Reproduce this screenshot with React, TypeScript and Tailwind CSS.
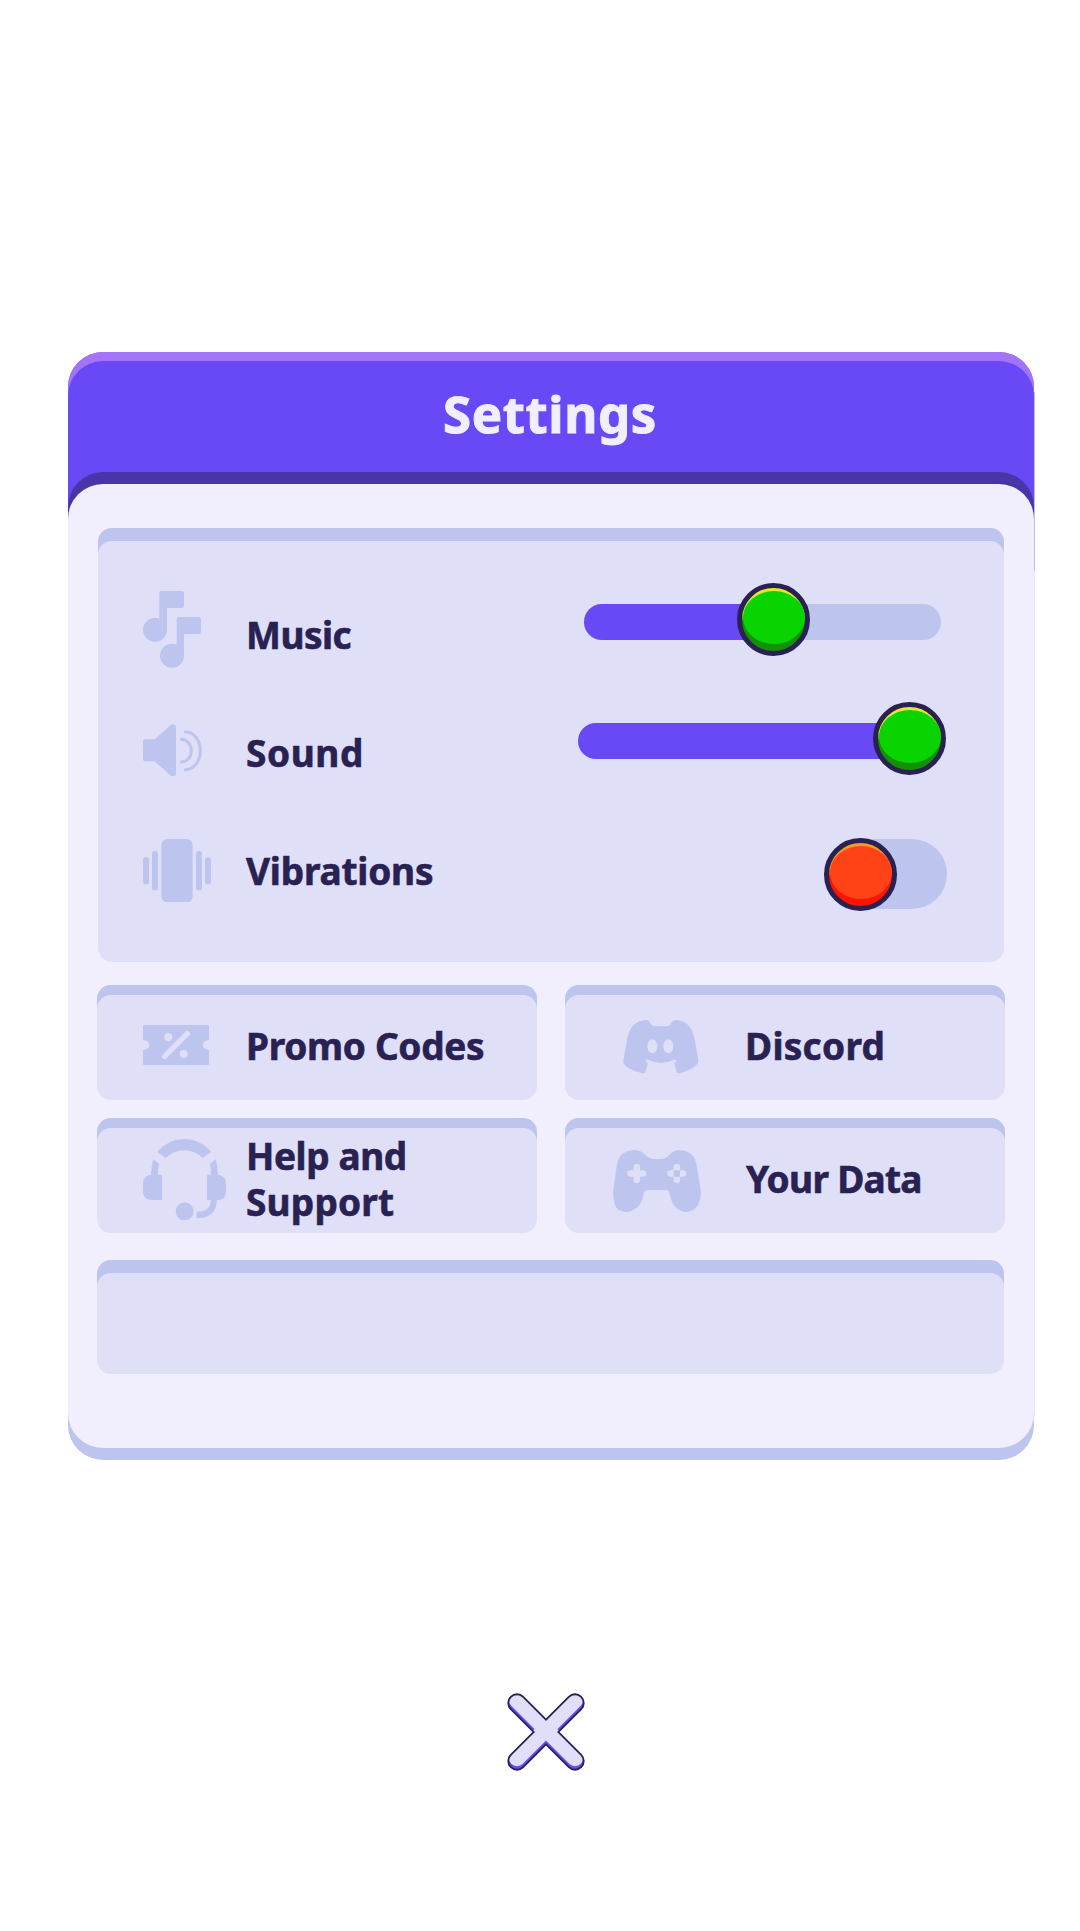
import type { ReactNode } from "react";

const ICON = "#bdc5ee";
const SURFACE = "#dfdff7";

function MusicIcon() {
  return (
    <svg width="58" height="77" viewBox="69 63 174 231" fill={ICON}>
      <path d="M118 70q0-7 7-7H185q7 0 7 7V107q0 7-7 7H141V180a36 36 0 1 1-23-34Z" />
      <path d="M170 148q0-7 7-7H236q7 0 7 7V185q0 7-7 7H192V258a36 36 0 1 1-22-34Z" />
    </svg>
  );
}

function SoundIcon() {
  return (
    <svg width="59" height="53" viewBox="69 461 177 159" fill={ICON}>
      <path d="M77 507H104L151 465Q157 460 163 463Q168 465 168 472V608Q168 615 163 617Q157 620 151 615L104 573H77Q69 573 69 565V515Q69 507 77 507Z" />
      <g fill="none" stroke={ICON} strokeWidth="9" strokeLinecap="round">
        <path d="M184 507A30 34 0 0 1 184 575" />
        <path d="M196 484A45 57 0 0 1 196 598" />
      </g>
    </svg>
  );
}

function VibrationIcon() {
  return (
    <svg width="68" height="63.3" viewBox="69 806 204 190" fill={ICON}>
      <rect x="69" y="861" width="18" height="81" rx="8" />
      <rect x="96" y="842" width="18" height="118" rx="8" />
      <rect x="124" y="806" width="94" height="190" rx="18" />
      <rect x="228" y="842" width="18" height="118" rx="8" />
      <rect x="255" y="861" width="18" height="81" rx="8" />
    </svg>
  );
}

function TicketIcon() {
  return (
    <svg width="66" height="40" viewBox="189 285 198 120" fill={ICON}>
      <path d="M192 285H384Q387 285 387 288V330Q369 331 369 345Q369 359 387 360V402Q387 405 384 405H192Q189 405 189 402V360Q208 359 208 345Q208 331 189 330V288Q189 285 192 285Z" />
      <path d="M254 379L322 311" stroke={SURFACE} strokeWidth="16" strokeLinecap="round" />
      <circle cx="265" cy="322" r="12" fill={SURFACE} />
      <circle cx="311" cy="372" r="12" fill={SURFACE} />
    </svg>
  );
}

function HeadsetIcon() {
  const cup =
    "M220 686L237 701Q234 716 234 733H243Q246 733 246 736V809H213Q189 807 189 785V758Q191 735 213 733Q214 708 220 686Z";
  return (
    <svg width="83" height="81.7" viewBox="189 626 249 245" fill={ICON}>
      <path d="M231 664Q266 626 313 626Q360 626 394 664L368 684Q345 660 313 660Q281 660 257 684Z" />
      <path d={cup} />
      <path d={cup} transform="translate(627 0) scale(-1 1)" />
      <path d="M392 806Q394 844 350 844V863Q409 866 411 806Z" />
      <circle cx="314" cy="843" r="27" />
    </svg>
  );
}

function DiscordIcon() {
  return (
    <svg width="75.7" height="53.7" viewBox="248 179 227 161" fill={ICON}>
      <path d="M318 179Q326 179 330 188Q333 196 340 197Q362 199 384 197Q390 196 393 187Q397 179 405 179Q451 181 462 232L474 300Q476 311 450 327Q434 336 414 339Q410 339 409 336L402 311Q402 307 407 304Q410 300 405 297Q402 296 399 299Q362 317 325 299Q319 295 316 299Q314 302 319 305Q323 308 322 312L315 334Q313 340 306 339Q284 335 264 323Q247 312 249 301L261 232Q272 181 318 179Z" />
      <ellipse cx="336" cy="258" rx="15" ry="21" fill={SURFACE} />
      <ellipse cx="384" cy="258" rx="15" ry="21" fill={SURFACE} />
    </svg>
  );
}

function GamepadIcon() {
  return (
    <svg width="88.3" height="62" viewBox="219 570 265 186" fill={ICON}>
      <path d="M282 570Q302 570 317 586Q328 597 342 597H366Q378 596 388 585Q401 570 419 570Q462 572 470 615L482 690Q486 712 474 736Q460 757 436 756Q398 750 389 702Q388 690 378 690H324Q312 690 311 702Q304 748 262 756Q232 757 225 734Q217 712 220 690L231 613Q238 573 282 570Z" />
      <g stroke={SURFACE} strokeWidth="20" strokeLinecap="round">
        <path d="M272 640.500H309M290.500 622V659" />
        <path d="M392 640.500H429M410.500 622V659" />
      </g>
      <path d="M405 631H417L420 634V648L417 651H405L401 648V634Z" />
    </svg>
  );
}

function CloseIcon() {
  const cross = "M81 67L255 241M255 67L81 241";
  return (
    <svg width="78" height="78" viewBox="51 37 234 234" fill="none" strokeLinecap="round">
      <mask id="cross" maskUnits="userSpaceOnUse" x="51" y="37" width="234" height="234">
        <path d={cross} stroke="#fff" strokeWidth="47" />
      </mask>
      <path d={cross} stroke="#282152" strokeWidth="58" />
      <g mask="url(#cross)">
        <path d={cross} stroke="#6949f6" strokeWidth="52" />
        <path d={cross} stroke={SURFACE} strokeWidth="49" transform="translate(0 -9)" />
      </g>
    </svg>
  );
}

function Thumb({ on, className }: { on: boolean; className: string }) {
  return (
    <span
      className={`absolute flex size-[73px] justify-center rounded-full border-5 border-[#282152] pt-[3px] ${
        on
          ? "bg-linear-to-b from-[#e9e62c] from-40% to-[#149005] to-52%"
          : "bg-linear-to-b from-[#f79b22] from-40% to-[#ff1400] to-52%"
      } ${className}`}
    >
      <span className={`h-[53px] w-[62px] rounded-[50%] ${on ? "bg-[#0ad400]" : "bg-[#ff4317]"}`} />
    </span>
  );
}

const text = "text-[37px] leading-[46px] font-bold text-[#282152] [-webkit-text-stroke:0.6px_#282152]";

function Row({ icon, iconClass, label, labelClass, children }: { icon: ReactNode; iconClass: string; label: string; labelClass: string; children: ReactNode }) {
  return (
    <div className="flex h-[118px] items-start">
      <span className={`w-[103px] ${iconClass}`}>{icon}</span>
      <span className={`mt-[29px] ${text} ${labelClass}`}>{label}</span>
      {children}
    </div>
  );
}

function Tile({ icon, iconClass, label, labelClass }: { icon: ReactNode; iconClass: string; label: ReactNode; labelClass: string }) {
  return (
    <button className="flex h-[115px] items-start rounded-[14px] bg-[#dfdff7] text-left shadow-[inset_0_10px_0_#bdc5ee]">
      <span className={`shrink-0 ${iconClass}`}>{icon}</span>
      <span className={`${text} ${labelClass}`}>{label}</span>
    </button>
  );
}

export default function App() {
  return (
    <div className="flex h-[1931px] w-[1080px] flex-col bg-white pt-[352px] pl-[68px] font-['Noto_Sans',sans-serif] [&_svg]:block">
      <header className="h-[172px] w-[966px] rounded-t-[35px] bg-[#6949f6] pt-[9px] shadow-[inset_0_9px_0_#a374f9]">
        <div className="flex h-[111px] justify-center pt-[17px] pr-[2px]">
          <h1 className="text-[51px] leading-[70px] font-bold tracking-[0.6px] text-[#f1eefe] [-webkit-text-stroke:1px_#f1eefe]">Settings</h1>
        </div>
        <div className="h-[52px] rounded-t-[35px] bg-[#4a35a8]" />
      </header>

      <main className="relative -mt-10 h-[964px] w-[966px] rounded-[35px] bg-[#f1eefe] pt-11 pl-[29px] shadow-[0_12px_0_#bdc5ee]">
        {/* Hairline along the card's right edge */}
        <div className="absolute -top-[92px] left-full h-[1024px] w-px bg-[#ebe9f6]">
          <div className="h-[179px] bg-[#c3b7fb]" />
        </div>

        <section className="ml-px h-[434px] w-[906px] rounded-[14px] bg-[#dfdff7] pt-[55px] pl-[45px] shadow-[inset_0_13px_0_#bdc5ee]">
          <Row icon={<MusicIcon />} iconClass="mt-2" label="Music" labelClass="tracking-[-0.5px]">
            <div className="relative mt-[21px] mr-[63px] ml-auto h-9 w-[357px] rounded-full bg-[#bdc5ee]">
              <div className="h-9 w-[190px] rounded-l-full bg-[#6949f6]" />
              <Thumb on className="-top-[21px] left-[153px]" />
            </div>
          </Row>
          <Row icon={<SoundIcon />} iconClass="mt-[23px]" label="Sound" labelClass="tracking-[0.6px]">
            <div className="relative mt-[22px] mr-[63px] ml-auto h-9 w-[363px] rounded-full bg-[#6949f6]">
              <Thumb on className="-top-[21px] left-[295px]" />
            </div>
          </Row>
          <Row icon={<VibrationIcon />} iconClass="mt-[20px]" label="Vibrations" labelClass="tracking-[-0.2px]">
            <div className="relative mt-[20px] mr-[57px] ml-auto h-[70px] w-[121px] rounded-full bg-[#bdc5ee]">
              <Thumb on={false} className="-top-px -left-[2px]" />
            </div>
          </Row>
        </section>

        <section className="mt-[23px] grid w-[908px] grid-cols-[440px_440px] gap-x-7 gap-y-[18px]">
          <Tile icon={<TicketIcon />} iconClass="w-[149px] pl-[46px] pt-10" label="Promo Codes" labelClass="mt-[38px] tracking-[-0.3px] whitespace-nowrap" />
          <Tile icon={<DiscordIcon />} iconClass="w-[180px] pl-[58px] pt-[35px]" label="Discord" labelClass="mt-[38px] tracking-[0.3px]" />
          <Tile
            icon={<HeadsetIcon />}
            iconClass="w-[149px] pl-[46px] pt-[21px]"
            label={
              <>
                <span className="block tracking-[-0.4px]">Help and</span>
                <span className="block tracking-[0.2px]">Support</span>
              </>
            }
            labelClass="mt-[15px]"
          />
          <Tile icon={<GamepadIcon />} iconClass="w-[181px] pl-[48px] pt-8" label="Your Data" labelClass="mt-[38px] tracking-[-0.7px]" />
        </section>

        <section className="mt-[27px] h-[114px] w-[907px] rounded-[14px] bg-[#dfdff7] shadow-[inset_0_13px_0_#bdc5ee]" />
      </main>

      <button className="mt-[245px] ml-[439px] size-[78px]" aria-label="Close">
        <CloseIcon />
      </button>
    </div>
  );
}
